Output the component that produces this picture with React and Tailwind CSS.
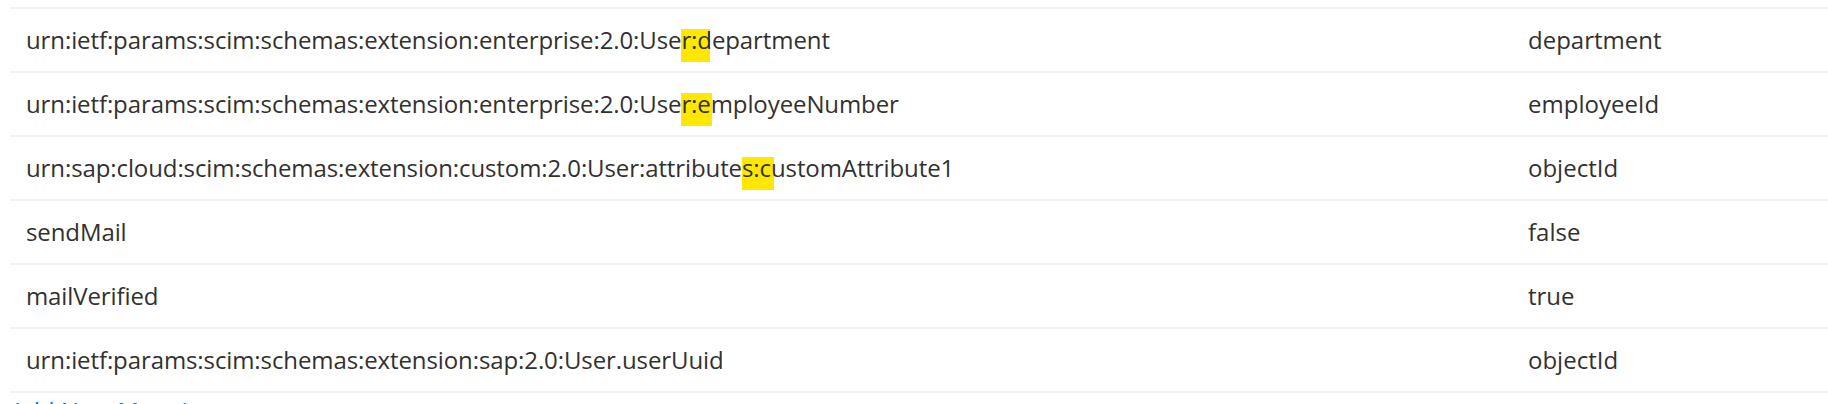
import React from "react";

const rows = [
  { source: ["urn:ietf:params:scim:schemas:extension:enterprise:2.0:Use", "r:", "department"], target: "department", w: "w-[29px]" },
  { source: ["urn:ietf:params:scim:schemas:extension:enterprise:2.0:Use", "r:e", "mployeeNumber"], target: "employeeId", w: "w-[31px]" },
  { source: ["urn:sap:cloud:scim:schemas:extension:custom:2.0:User:attribute", "s:c", "ustomAttribute1"], target: "objectId", w: "w-[32px]" },
  { source: ["sendMail"], target: "false" },
  { source: ["mailVerified"], target: "true" },
  { source: ["urn:ietf:params:scim:schemas:extension:sap:2.0:User.userUuid"], target: "objectId" },
];

const Mark = ({ children, w }) => (
  <span className="relative">
    <span className={`absolute left-0 top-[6px] h-[33px] bg-[#ffe800] ${w}`} />
    <span className="relative">{children}</span>
  </span>
);

const App = () => {
  return (
    <div
      className="w-[1828px] h-[404px] overflow-hidden bg-white pt-[7px] pl-[10px] text-[24px] text-[#323130]"
      style={{ fontFamily: '"Open Sans", "Noto Sans", sans-serif' }}
    >
      <div className="flex flex-col">
        {rows.map((row, idx) => (
          <div key={idx} className="grid grid-cols-[1502px_1fr] h-[64px] border-t-2 border-[#f3f2f1]">
            <div className="flex items-center pl-4 whitespace-nowrap tracking-[-0.1px]">
              <span>
                {row.source[0]}
                {row.source[1] && <Mark w={row.w}>{row.source[1]}</Mark>}
                {row.source[2] && <span className="relative">{row.source[2]}</span>}
              </span>
            </div>
            <div className="flex items-center pl-4 whitespace-nowrap">{row.target}</div>
          </div>
        ))}
        <div className="border-t-2 border-[#f3f2f1]">
          <a className="text-[#0078d4] leading-[30px] cursor-pointer">Add New Mapping</a>
        </div>
      </div>
    </div>
  );
};

export default App;
